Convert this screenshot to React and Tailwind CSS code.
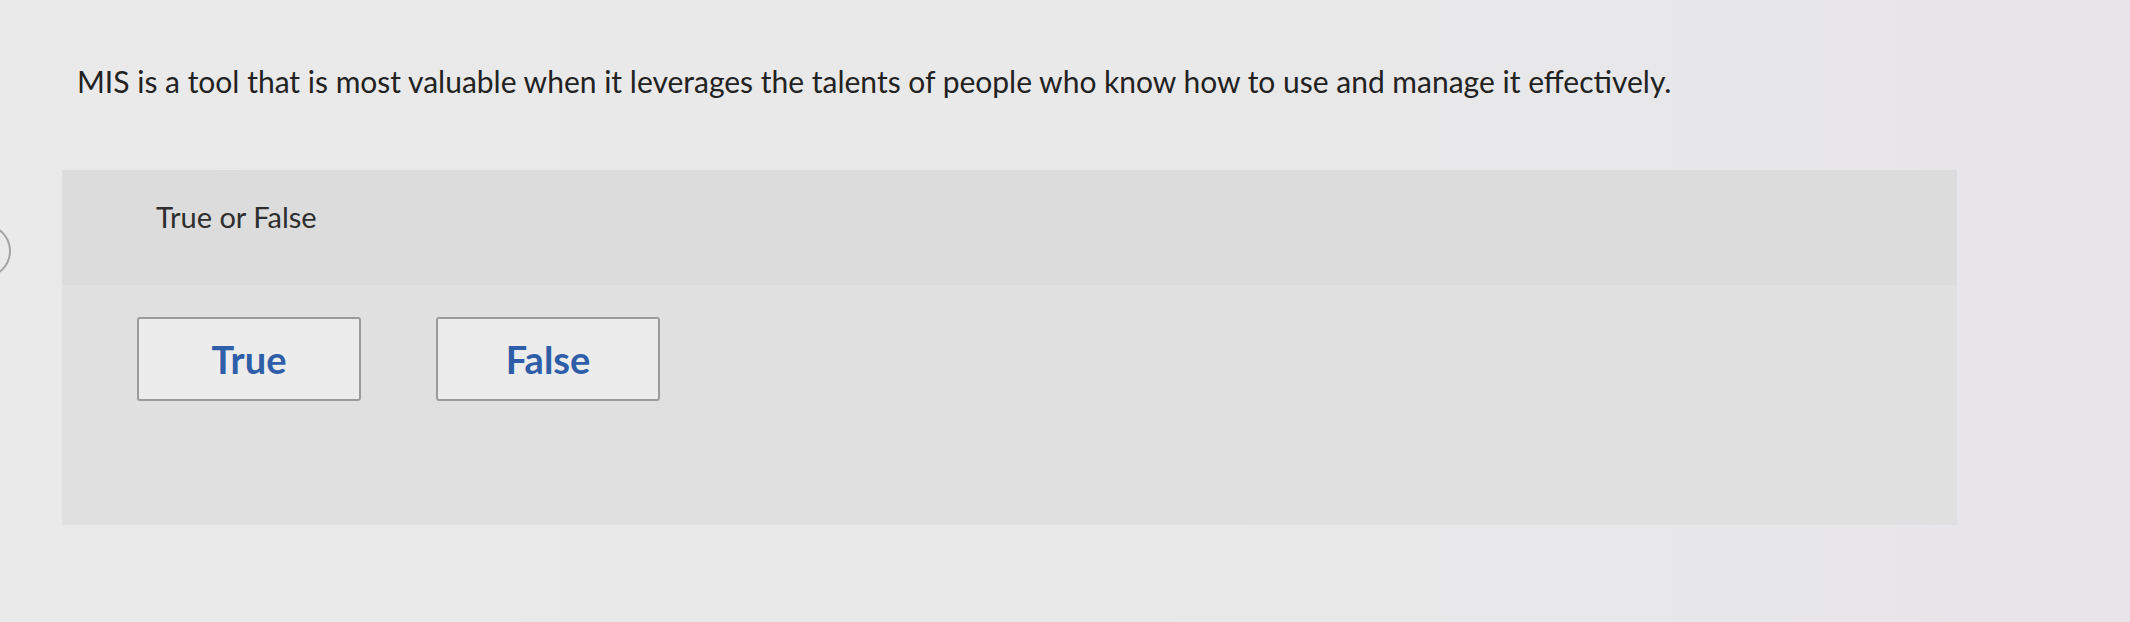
import React from "react";

const question =
    "MIS is a tool that is most valuable when it leverages the talents of people who know how to use and manage it effectively.";

function ChoiceButton({ label }) {
    return (
        <button
            type="button"
            className="flex h-[84px] w-[224px] items-center justify-center rounded-[3px] border-2 border-[#9b9b9b] bg-[#ececec] text-[38px] font-bold text-[#2f5ea8]"
        >
            {label}
        </button>
    );
}

export default function App() {
    return (
        <div className="min-h-[622px] w-[2130px] bg-gradient-to-r from-[#eaeaea] via-[#e9e9e9] to-[#e7e5e9] font-['Lato',sans-serif] text-[#222]">
            <p className="pl-[77px] pt-[62px] text-[30px] leading-[38px]">{question}</p>

            <div className="mt-[70px] flex items-start">
                <span className="-ml-[43px] mt-[54px] h-[54px] w-[54px] shrink-0 rounded-full border-2 border-[#a4a4a4]" />
                <section className="ml-[51px] w-[1895px] rounded-[3px]">
                    <div className="h-[115px] bg-[#dcdcdc] pl-[94px] pt-[30px] text-[29px] leading-[34px] text-[#2e2e2e]">
                        True or False
                    </div>
                    <div className="flex h-[240px] gap-[75px] bg-[#e0e0e1] pl-[75px] pt-[32px]">
                        <ChoiceButton label="True" />
                        <ChoiceButton label="False" />
                    </div>
                </section>
            </div>
        </div>
    );
}
